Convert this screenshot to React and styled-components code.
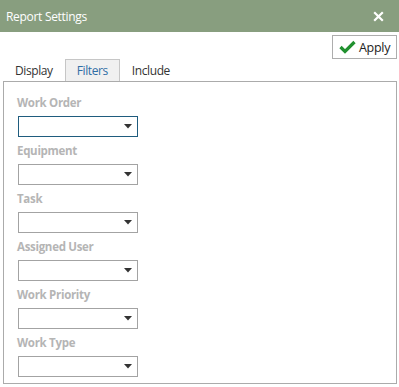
import React from "react";
import styled, { createGlobalStyle } from "styled-components";

const Global = createGlobalStyle`
  html, body { margin: 0; padding: 0; background: #fff; }
  body { font-family: "Open Sans", "Noto Sans", sans-serif; }
  * { box-sizing: border-box; }
`;

const Window = styled.div`
  width: 399px;
  height: 387px;
  display: flex;
  flex-direction: column;
  background: #fff;
`;

const TitleBar = styled.div`
  height: 32px;
  background: #889e7f;
  color: #fff;
  display: flex;
  align-items: center;
  justify-content: space-between;
  padding: 0 15px 0 6px;
  font-size: 12px;
  letter-spacing: -0.3px;
`;

const CloseButton = styled.span`
  display: flex;
  width: 11px;
  height: 11px;
`;

const Toolbar = styled.div`
  height: 27px;
  display: flex;
  justify-content: flex-end;
  align-items: flex-start;
  padding: 3px 2px 0 0;
`;

const ApplyButton = styled.button`
  height: 24px;
  width: 65px;
  border: 1px solid #adadad;
  background: #fff;
  display: flex;
  align-items: center;
  gap: 3px;
  padding: 0 0 0 6px;
  font-family: inherit;
  font-size: 12.5px;
  letter-spacing: -0.3px;
  color: #222;
`;

const Tabs = styled.div`
  height: 22px;
  display: flex;
  padding-left: 3px;
`;

const Tab = styled.div`
  height: 22px;
  padding: 0 11px;
  display: flex;
  align-items: center;
  font-size: 12px;
  letter-spacing: -0.4px;
  color: ${(p) => (p.$active ? "#2f6ea5" : "#333")};
  background: ${(p) => (p.$active ? "#f0f0f0" : "transparent")};
  border: 1px solid ${(p) => (p.$active ? "#c6c6c6" : "transparent")};
  border-bottom: none;
`;

const Panel = styled.div`
  flex: 1;
  margin: 0 2px 3px 3px;
  border: 1px solid #ababab;
  padding: 13px 0 0 13px;
  display: flex;
  flex-direction: column;
`;

const Field = styled.div`
  display: flex;
  flex-direction: column;
  margin-bottom: 6px;
`;

const Label = styled.div`
  height: 16px;
  line-height: 16px;
  font-size: 11.5px;
  font-weight: 700;
  letter-spacing: -0.3px;
  color: #b5b5b5;
  margin-bottom: 5px;
`;

const Select = styled.div`
  width: 120px;
  height: 21px;
  margin-left: 1px;
  border: 1px solid ${(p) => (p.$focused ? "#1f5c7e" : "#a3a3a3")};
  display: flex;
  align-items: center;
  justify-content: flex-end;
  padding-right: 5px;
`;

const Caret = () => (
  <svg width="8" height="5" viewBox="0 0 8 5">
    <path d="M0 0 H8 L4 4.5 Z" fill="#333" />
  </svg>
);

const Check = () => (
  <svg width="17" height="14" viewBox="0 0 17 14">
    <path d="M1.5 7 L6 11.5 L15.5 2" fill="none" stroke="#21912f" strokeWidth="3.2" strokeLinejoin="miter" />
  </svg>
);

const fields = ["Work Order", "Equipment", "Task", "Assigned User", "Work Priority", "Work Type"];

export default function App() {
  return (
    <>
      <Global />
      <Window>
        <TitleBar>
          <span>Report Settings</span>
          <CloseButton>
            <svg width="11" height="11" viewBox="0 0 11 11">
              <path d="M1.2 1.2 L9.8 9.8 M9.8 1.2 L1.2 9.8" stroke="#fff" strokeWidth="2.2" />
            </svg>
          </CloseButton>
        </TitleBar>
        <Toolbar>
          <ApplyButton>
            <Check />
            Apply
          </ApplyButton>
        </Toolbar>
        <Tabs>
          <Tab>Display</Tab>
          <Tab $active>Filters</Tab>
          <Tab>Include</Tab>
        </Tabs>
        <Panel>
          {fields.map((f, i) => (
            <Field key={f}>
              <Label>{f}</Label>
              <Select $focused={i === 0}>
                <Caret />
              </Select>
            </Field>
          ))}
        </Panel>
      </Window>
    </>
  );
}
